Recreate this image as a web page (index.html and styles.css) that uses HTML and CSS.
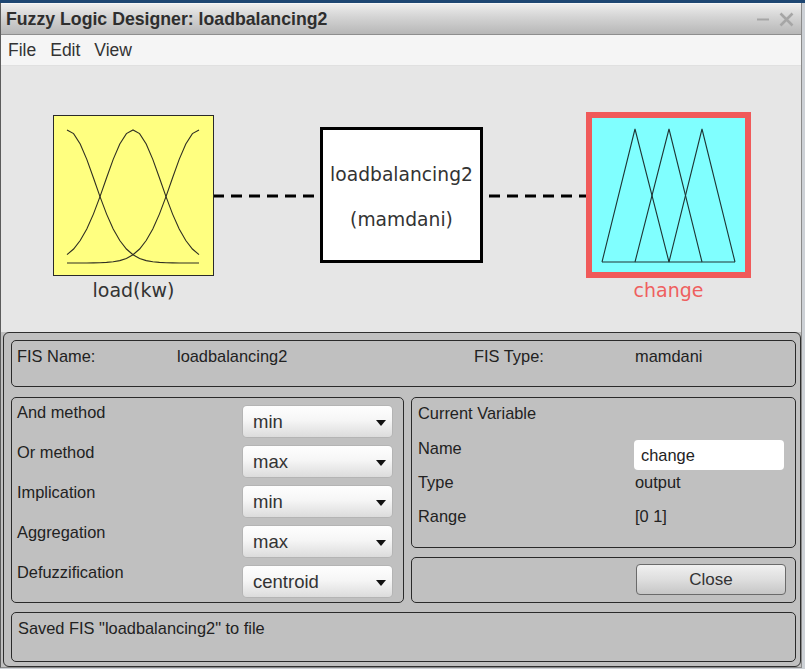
FILE: index.html
```html
<!DOCTYPE html>
<html>
<head>
<meta charset="utf-8">
<title>Fuzzy Logic Designer</title>
<link rel="stylesheet" href="styles.css">
</head>
<body>
<div class="topstrip"></div>
<div class="window">
  <div class="titlebar">
    <span class="title">Fuzzy Logic Designer: loadbalancing2</span>
    <svg class="winctl" width="40" height="16" viewBox="0 0 40 16">
      <line x1="1" y1="8.5" x2="13" y2="8.5" stroke="#a6a6a6" stroke-width="2"/>
      <path d="M24.5 2.5 L36.5 14.5 M36.5 2.5 L24.5 14.5" stroke="#a6a6a6" stroke-width="2.6" fill="none"/>
    </svg>
  </div>
  <div class="menubar"><span>File</span><span>Edit</span><span>View</span></div>
  <div class="diagram">
    <svg class="connectors" width="800" height="266" viewBox="0 0 800 266">
      <line x1="212" y1="130" x2="319" y2="130" stroke="#000" stroke-width="3" stroke-dasharray="11 7"/>
      <line x1="488" y1="130" x2="585" y2="130" stroke="#000" stroke-width="3" stroke-dasharray="11 7"/>
    </svg>
    <div class="node node-in">
      <svg width="161" height="161" viewBox="0 0 161 161">
        <rect x="0.5" y="0.5" width="160" height="160" fill="#ffff80" stroke="#2a2a2a"/>
        <g fill="none" stroke="#2f2f22" stroke-width="1.1">
          <polyline points="14,15 20.6,18.6 27.2,29 33.8,44.4 40.4,62.7 47,81.6 53.6,99.1 60.2,113.9 66.8,125.5 73.4,134 80,139.7 86.6,143.4 93.2,145.6 99.8,146.8 106.4,147.4 113,147.8 119.6,147.9 126.2,148 146,148"/>
          <polyline points="14,139.7 20.6,134 27.2,125.5 33.8,113.9 40.4,99.1 47,81.6 53.6,62.7 60.2,44.4 66.8,29 73.4,18.6 80,15 86.6,18.6 93.2,29 99.8,44.4 106.4,62.7 113,81.6 119.6,99.1 126.2,113.9 132.8,125.5 139.4,134 146,139.7"/>
          <polyline points="14,148 33.8,148 40.4,147.9 47,147.8 53.6,147.4 60.2,146.8 66.8,145.6 73.4,143.4 80,139.7 86.6,134 93.2,125.5 99.8,113.9 106.4,99.1 113,81.6 119.6,62.7 126.2,44.4 132.8,29 139.4,18.6 146,15"/>
        </g>
      </svg>
      <span class="node-label label-in">load(kw)</span>
    </div>
    <div class="node node-fis">
      <span>loadbalancing2</span>
      <span>(mamdani)</span>
    </div>
    <div class="node node-out">
      <svg width="165" height="166" viewBox="0 0 165 166">
        <rect x="3" y="3" width="159" height="160" fill="#80ffff" stroke="#f05a5a" stroke-width="6"/>
        <g fill="none" stroke="#1f3535" stroke-width="1.1">
          <polyline points="16,150 49,17 83,150"/>
          <polyline points="49,150 83,17 116,150"/>
          <polyline points="83,150 116,17 149,150"/>
          <line x1="16" y1="150" x2="149" y2="150"/>
        </g>
      </svg>
      <span class="node-label label-out">change</span>
    </div>
  </div>
  <div class="panel">
    <div class="group fis">
      <span>FIS Name:</span>
      <span>loadbalancing2</span>
      <span>FIS Type:</span>
      <span>mamdani</span>
    </div>
    <div class="middle">
      <div class="group methods">
        <div class="mrow"><span class="mlabel">And method</span><div class="dropdown"><span>min</span><i class="caret"></i></div></div>
        <div class="mrow"><span class="mlabel">Or method</span><div class="dropdown"><span>max</span><i class="caret"></i></div></div>
        <div class="mrow"><span class="mlabel">Implication</span><div class="dropdown"><span>min</span><i class="caret"></i></div></div>
        <div class="mrow"><span class="mlabel">Aggregation</span><div class="dropdown"><span>max</span><i class="caret"></i></div></div>
        <div class="mrow"><span class="mlabel">Defuzzification</span><div class="dropdown"><span>centroid</span><i class="caret"></i></div></div>
      </div>
      <div class="rightcol">
        <div class="group curvar">
          <div class="cv-head">Current Variable</div>
          <div class="cv-row cv-name"><span>Name</span><div class="field">change</div></div>
          <div class="cv-row"><span>Type</span><span class="val">output</span></div>
          <div class="cv-row cv-last"><span>Range</span><span class="val">[0 1]</span></div>
        </div>
        <div class="group actions">
          <div class="button">Close</div>
        </div>
      </div>
    </div>
    <div class="group status">Saved FIS "loadbalancing2" to file</div>
  </div>
</div>
</body>
</html>
```
FILE: styles.css
```css
* { box-sizing: border-box; }
html, body { margin: 0; padding: 0; }
body {
  width: 805px;
  height: 669px;
  overflow: hidden;
  background: #cdd1d6;
  font-family: "Liberation Sans", Arial, sans-serif;
  color: #222;
}
.topstrip {
  height: 3px;
  background: #1d4672;
}
.window {
  width: 802px;
  height: 665px;
  border-left: 1px solid #5c5c5c;
  border-right: 1px solid #8a8a8a;
  border-bottom: 1px solid #8a8a8a;
  background: #c0c0c0;
  display: flex;
  flex-direction: column;
}
.titlebar {
  height: 32px;
  flex: none;
  display: flex;
  align-items: center;
  justify-content: space-between;
  padding: 0 5px 0 5px;
  background: linear-gradient(#ededed, #d3d3d3 45%, #b7b7b7);
  border-top: 1px solid #f6f6f6;
  border-bottom: 1px solid #8e8e8e;
}
.title {
  font-weight: bold;
  font-size: 17.7px;
  color: #2e2e2e;
}
.menubar {
  height: 31px;
  flex: none;
  display: flex;
  align-items: center;
  gap: 14px;
  padding-left: 7px;
  background: #f5f5f5;
  border-bottom: 1px solid #e0e0e0;
  font-size: 17.5px;
  color: #333;
}
.diagram {
  height: 266px;
  flex: none;
  position: relative;
  background: #e6e6e6;
}
.connectors {
  position: absolute;
  left: 0;
  top: 0;
}
.node {
  position: absolute;
  display: flex;
  flex-direction: column;
  align-items: center;
}
.node svg { display: block; }
.node-in { left: 52px; top: 49px; }
.node-out { left: 585px; top: 46px; }
.node-label {
  font-family: "DejaVu Sans", sans-serif;
  font-size: 19px;
  line-height: 22px;
  white-space: nowrap;
}
.label-in { margin-top: 3px; color: #333; }
.label-out { margin-top: 1px; color: #ef5f5f; }
.node-fis {
  left: 319px;
  top: 61px;
  width: 163px;
  height: 136px;
  background: #fff;
  border: 3px solid #000;
  justify-content: center;
  gap: 23px;
  padding-top: 5px;
  font-family: "DejaVu Sans", sans-serif;
  font-size: 18.7px;
  line-height: 22px;
  color: #333;
}
.panel {
  flex: 1;
  margin: 0 0 1px 2px;
  border: 1px solid #2e2e2e;
  border-radius: 6px;
  padding: 7px 4px 4px 7px;
  display: flex;
  flex-direction: column;
  gap: 10px;
  background: #c0c0c0;
  font-size: 16.4px;
}
.group {
  border: 1px solid #2a2a2a;
  border-radius: 5px;
}
.fis {
  height: 47px;
  flex: none;
  display: grid;
  grid-template-columns: 160px 297px 161px 1fr;
  align-items: start;
  padding: 6px 0 0 5px;
  line-height: 19px;
}
.middle {
  height: 206px;
  flex: none;
  display: grid;
  grid-template-columns: 393px 1fr;
  gap: 7px;
}
.methods {
  display: flex;
  flex-direction: column;
  gap: 9px;
  padding: 8px 11px 0 5px;
}
.mrow {
  height: 31px;
  display: flex;
  justify-content: space-between;
  align-items: flex-start;
}
.mlabel {
  line-height: 19px;
  margin-top: -3px;
}
.dropdown {
  width: 149px;
  height: 31px;
  border-radius: 4px;
  background: linear-gradient(#fefefe, #f6f6f6 45%, #dcdcdc);
  box-shadow: 0 0 0 1px rgba(0, 0, 0, 0.06);
  display: flex;
  align-items: center;
  justify-content: space-between;
  padding: 0 6px 0 10px;
  font-size: 18.5px;
  color: #333;
}
.caret {
  width: 0;
  height: 0;
  border-left: 5px solid transparent;
  border-right: 5px solid transparent;
  border-top: 6px solid #111;
  margin-top: 2px;
}
.rightcol {
  display: flex;
  flex-direction: column;
  gap: 9px;
}
.curvar {
  height: 151px;
  flex: none;
  padding: 5px 0 0 6px;
  line-height: 20px;
}
.cv-head { height: 20px; margin-bottom: 15px; }
.cv-row {
  height: 34px;
  display: grid;
  grid-template-columns: 216px 150px;
  align-items: start;
}
.cv-last { height: 20px; }
.field {
  margin-top: 2px;
  height: 30px;
  background: #fff;
  border-radius: 4px;
  padding-left: 7px;
  line-height: 30px;
}
.val { padding-left: 1px; }
.actions {
  flex: 1;
  display: flex;
  justify-content: flex-end;
  align-items: flex-start;
  padding: 6px 9px 0 0;
}
.button {
  width: 150px;
  height: 31px;
  border: 1px solid #6a6a6a;
  border-radius: 4px;
  background: linear-gradient(#f0f0f0, #dedede 50%, #c6c6c6);
  display: flex;
  align-items: center;
  justify-content: center;
  font-size: 17px;
  color: #333;
}
.status {
  height: 50px;
  flex: none;
  margin-top: -1px;
  padding: 6px 0 0 6px;
  line-height: 19px;
}
```
